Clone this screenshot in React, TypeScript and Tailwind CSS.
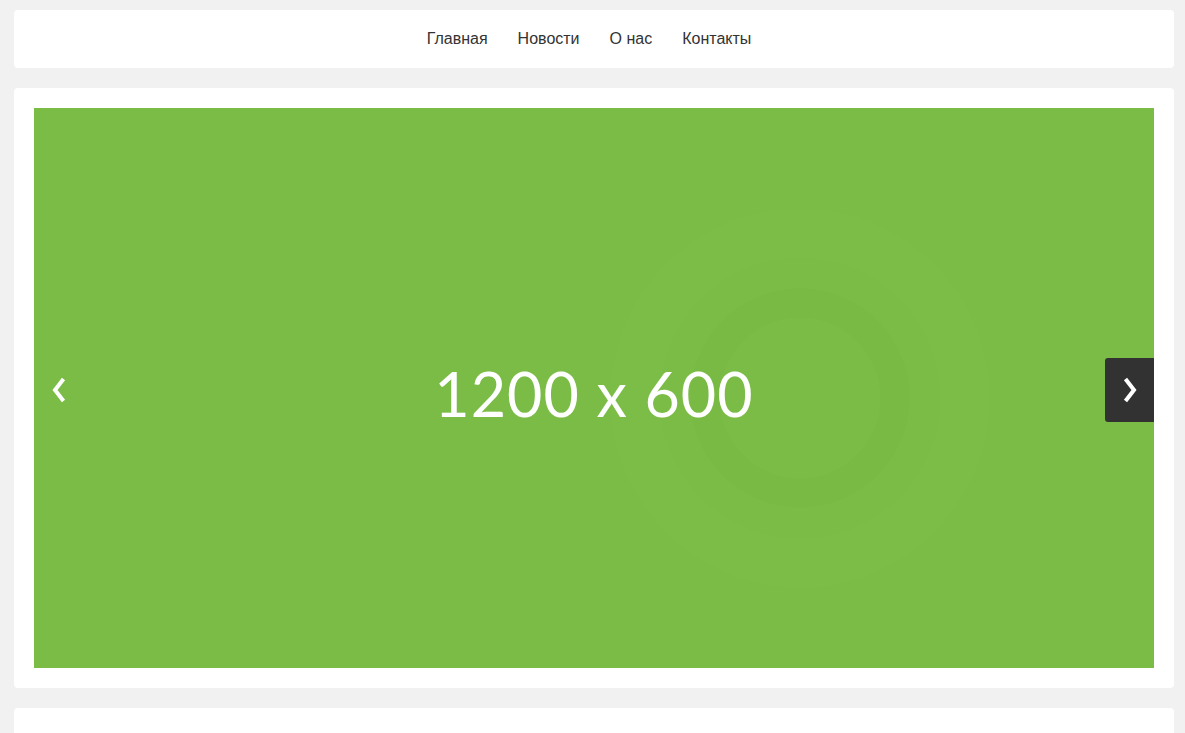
import { useState } from 'react';

const links = ['Главная', 'Новости', 'О нас', 'Контакты'];

function Chevron({ dir }: { dir: 'left' | 'right' }) {
  return (
    <svg width="16" height="26" viewBox="0 0 16 26" fill="none">
      <polyline
        points={dir === 'left' ? '12.5,2 4,13 12.5,24' : '3.5,2 12,13 3.5,24'}
        stroke="white"
        strokeWidth="4"
        strokeLinejoin="miter"
      />
    </svg>
  );
}

export default function App() {
  const [slide, setSlide] = useState(0);

  return (
    <div className="min-h-screen bg-[#f1f1f1] pt-[10px] pl-[14px] pr-[11px] flex flex-col gap-5 font-['Liberation_Sans',Arial,sans-serif]">
      <nav className="h-[58px] bg-white rounded flex items-center justify-center pr-[10px]">
        <ul className="flex items-center">
          {links.map((link) => (
            <li key={link}>
              <a href="#" className="px-[15px] text-[16px] text-[#333]">
                {link}
              </a>
            </li>
          ))}
        </ul>
      </nav>

      <div className="bg-white rounded p-5">
        <div className="relative h-[560px] bg-[#7abc45] overflow-hidden flex items-center justify-center">
          {/* faint watermark from the placeholder image */}
          <svg className="absolute left-[576px] top-[100px]" width="380" height="380" viewBox="0 0 380 380" fill="none">
            <circle cx="190" cy="190" r="165" stroke="white" strokeOpacity="0.016" strokeWidth="50" />
            <circle cx="190" cy="190" r="95" stroke="black" strokeOpacity="0.006" strokeWidth="30" />
          </svg>

          <span className="relative pt-[12px] text-[61px] text-white font-['Lato',sans-serif] tracking-[1px]">
            1200 x 600
          </span>

          <button
            onClick={() => setSlide(slide - 1)}
            className="absolute left-0 top-[250px] w-[49px] h-16 flex items-center justify-center"
          >
            <Chevron dir="left" />
          </button>
          <button
            onClick={() => setSlide(slide + 1)}
            className="absolute right-0 top-[250px] w-[49px] h-16 bg-[#323232] rounded-l-[3px] flex items-center justify-center"
          >
            <Chevron dir="right" />
          </button>
        </div>
      </div>

      <div className="bg-white rounded h-[200px]" />
    </div>
  );
}
